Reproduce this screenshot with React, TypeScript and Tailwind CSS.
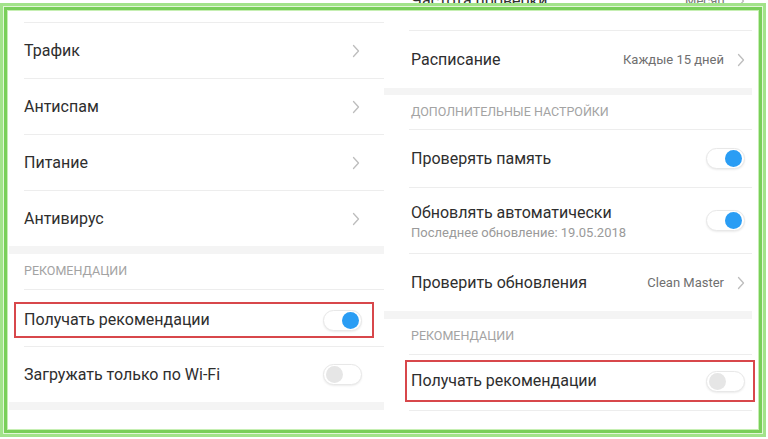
import React from "react";

const Chevron = () => (
  <svg width="8" height="14" viewBox="0 0 8 14" className="shrink-0">
    <polyline points="1.5,1.5 6.5,7 1.5,12.5" fill="none" stroke="#bdbdbd" strokeWidth="1.3" strokeLinecap="round" strokeLinejoin="round" />
  </svg>
);

const Toggle = ({ on }: { on: boolean }) => (
  <div className={`w-[39px] h-[21px] rounded-full bg-white border border-[#e8e8e8] shadow-[0_1px_2px_rgba(0,0,0,0.08)] flex items-center px-[2px] shrink-0 ${on ? "justify-end" : "justify-start"}`}>
    <div className={`w-[17px] h-[17px] rounded-full ${on ? "bg-[#2a9df4]" : "bg-[#e6e6e6]"}`} />
  </div>
);

const Divider = ({ ml }: { ml: string }) => <div className={`h-px bg-[#ededed] ${ml}`} />;

const Band = ({ h }: { h: string }) => <div className={`${h} bg-[#f4f4f4]`} />;

export default function App() {
  return (
    <div className="relative w-[768px] h-[439px] overflow-hidden bg-white font-['Roboto',sans-serif] text-[#2e2e2e]">
      <div className="flex pl-[9px]">
        {/* Left panel */}
        <div className="w-[375px] flex flex-col">
          <div className="h-[22px]" />
          <Divider ml="ml-[15px]" />
          {["Трафик", "Антиспам", "Питание", "Антивирус"].map((t, i) => (
            <React.Fragment key={t}>
              <div className="h-[55px] flex items-center justify-between pl-[15px] pr-[24px]">
                <span className="text-[16px]">{t}</span>
                <Chevron />
              </div>
              {i < 3 && <Divider ml="ml-[15px]" />}
            </React.Fragment>
          ))}
          <Band h="h-[8px]" />
          <div className="h-[35px] flex items-center pl-[15px]">
            <span className="text-[12.5px] text-[#a3a3a3]">РЕКОМЕНДАЦИИ</span>
          </div>
          <Divider ml="ml-[15px]" />
          <div className="h-[56px] pt-[12px] pb-[8px] pl-[5px] pr-[10px]">
            <div className="h-full border-2 border-[#d8474b] flex items-center justify-between pl-[8px] pr-[10px]">
              <span className="text-[16px]">Получать рекомендации</span>
              <Toggle on />
            </div>
          </div>
          <Divider ml="ml-[15px]" />
          <div className="h-[55px] flex items-center justify-between pl-[15px] pr-[22px]">
            <span className="text-[16px]">Загружать только по Wi-Fi</span>
            <Toggle on={false} />
          </div>
          <Band h="h-[8px]" />
        </div>

        {/* Right panel */}
        <div className="w-[368px] flex flex-col">
          <div className="h-[30px] flex items-start justify-between pl-[27px] pr-[7px] overflow-hidden">
            <span className="text-[16px] -mt-[9px] leading-[20px]">Частота проверки</span>
            <div className="flex items-center gap-[12px] -mt-[9px]">
              <span className="text-[13px] text-[#777777] leading-[20px]">Месяц</span>
              <Chevron />
            </div>
          </div>
          <Divider ml="ml-[25px]" />
          <div className="h-[57px] flex items-center justify-between pl-[27px] pr-[7px]">
            <span className="text-[16px]">Расписание</span>
            <div className="flex items-center gap-[13px]">
              <span className="text-[13px] text-[#6f6f6f]">Каждые 15 дней</span>
              <Chevron />
            </div>
          </div>
          <Band h="h-[7px]" />
          <div className="h-[34px] flex items-center pl-[27px]">
            <span className="text-[12.5px] text-[#a3a3a3]">ДОПОЛНИТЕЛЬНЫЕ НАСТРОЙКИ</span>
          </div>
          <Divider ml="ml-[25px]" />
          <div className="h-[57px] flex items-center justify-between pl-[27px] pr-[7px]">
            <span className="text-[16px]">Проверять память</span>
            <Toggle on />
          </div>
          <Divider ml="ml-[25px]" />
          <div className="h-[65px] flex items-center justify-between pl-[27px] pr-[7px]">
            <div className="flex flex-col pt-[3px]">
              <span className="text-[16px] leading-[20px]">Обновлять автоматически</span>
              <span className="text-[13px] text-[#9a9a9a] leading-[18px] mt-[1px]">Последнее обновление: 19.05.2018</span>
            </div>
            <Toggle on />
          </div>
          <Divider ml="ml-[25px]" />
          <div className="h-[57px] flex items-center justify-between pl-[27px] pr-[7px]">
            <span className="text-[16px]">Проверить обновления</span>
            <div className="flex items-center gap-[13px]">
              <span className="text-[13px] text-[#6f6f6f]">Clean Master</span>
              <Chevron />
            </div>
          </div>
          <Band h="h-[8px]" />
          <div className="h-[35px] flex items-center pl-[27px]">
            <span className="text-[12.5px] text-[#a3a3a3]">РЕКОМЕНДАЦИИ</span>
          </div>
          <Divider ml="ml-[25px]" />
          <div className="h-[55px] pt-[5px] pb-[8px] pl-[21px]">
            <div className="h-full w-[350px] border-2 border-[#d8474b] flex items-center justify-between pl-[4px] pr-[8px]">
              <span className="text-[16px]">Получать рекомендации</span>
              <Toggle on={false} />
            </div>
          </div>
          <Divider ml="ml-[25px]" />
        </div>
      </div>

      {/* Green frame overlay */}
      <div className="pointer-events-none absolute left-0 top-[3px] w-[766px] h-[434px] border-[3px] border-[#a2e38a] shadow-[inset_0_0_0_1px_#e2f6d8,inset_0_0_0_4px_#79cf59,inset_0_0_0_5px_#c6efb3]" />
    </div>
  );
}
